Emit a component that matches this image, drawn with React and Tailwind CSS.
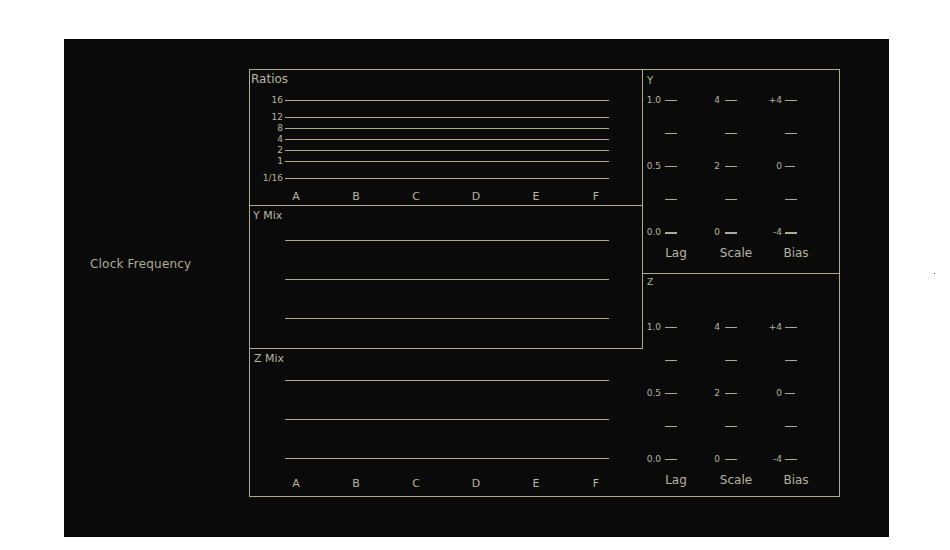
const ratioRows = [
  { label: '16', cls: '' },
  { label: '12', cls: 'mt-[6px]' },
  { label: '8', cls: '' },
  { label: '4', cls: '' },
  { label: '2', cls: '' },
  { label: '1', cls: '' },
  { label: '1/16', cls: 'mt-[6px]' },
]

const letters = ['A', 'B', 'C', 'D', 'E', 'F']

// each slider column: label box width, gap before tick, labels top -> bottom
const sliderCols = [
  { w: 'w-[18px]', gap: 'mr-[4px]', labels: ['1.0', '', '0.5', '', '0.0'] },
  { w: 'w-[17px]', gap: 'mr-[5px]', labels: ['4', '', '2', '', '0'] },
  { w: 'w-[19px]', gap: 'mr-[3px]', labels: ['+4', '', '0', '', '-4'] },
]

function Letters({ cls }) {
  return (
    <div className={`flex ml-[16px] text-[11px] leading-[16px] ${cls}`}>
      {letters.map(l => (
        <div key={l} className="w-[60px] text-center">{l}</div>
      ))}
    </div>
  )
}

function MixLines({ first }) {
  return (
    <div className="ml-[35px]">
      <div className={`w-[324px] h-px bg-[#b0aa92] ${first}`} />
      <div className="w-[324px] h-px bg-[#b0aa92] mt-[38px]" />
      <div className="w-[324px] h-px bg-[#b0aa92] mt-[38px]" />
    </div>
  )
}

function Sliders({ thick, labelShift }) {
  return (
    <>
      <div className="flex">
        {sliderCols.map((col, ci) => (
          <div key={ci} className="w-[60px] flex flex-col">
            {col.labels.map((lab, ri) => {
              const last = ri === 4
              const short = ci === 2 && ri === 2
              return (
                <div key={ri} className="h-[33px] flex items-center">
                  <div className={`${col.w} ${short ? 'mr-px' : col.gap} text-right text-[9px] leading-[11px]`}>{lab}</div>
                  <div
                    className={
                      short
                        ? 'w-[10px] h-px bg-[#b0aa92] ml-[2px]'
                        : last && thick
                          ? 'w-[12px] h-[2px] bg-[#b0aa92]'
                          : 'w-[12px] h-px bg-[#b0aa92]'
                    }
                  />
                </div>
              )
            })}
          </div>
        ))}
      </div>
      <div className={`flex ml-[3px] text-[12px] leading-[16px] ${labelShift}`}>
        <div className="w-[60px] text-center">Lag</div>
        <div className="w-[60px] text-center">Scale</div>
        <div className="w-[60px] text-center">Bias</div>
      </div>
    </>
  )
}

export default function App() {
  return (
    <div className="min-h-[550px] bg-white pl-[64px] pt-[39px] flex items-start font-['DejaVu_Sans',sans-serif]">
      <div className="w-[825px] h-[498px] bg-[#0a0a0a] text-[#b8b4a0] flex">
        {/* left label */}
        <div className="w-[185px] pl-[26px] pt-[217px] text-[12px] leading-[16px] tracking-[0.2px] text-[#b0ac98]">
          Clock Frequency
        </div>

        {/* main box */}
        <div className="mt-[30px] self-start border border-[#b0aa92] grid grid-cols-[393px_196px] grid-rows-[136px_68px_75px_147px]">
          {/* Ratios */}
          <div className="col-start-1 row-start-1 border-r border-b border-[#b0aa92]">
            <div className="pt-px h-[16px] pl-px text-[12px] leading-[16px]">Ratios</div>
            <div className="mt-[9px]">
              {ratioRows.map(r => (
                <div key={r.label} className={`h-[11px] flex items-center ${r.cls}`}>
                  <div className="w-[33px] text-right text-[9px] leading-[11px]">{r.label}</div>
                  <div className="ml-[2px] w-[324px] h-px bg-[#b0aa92]" />
                </div>
              ))}
            </div>
            <Letters cls="mt-[5px]" />
          </div>

          {/* Y panel */}
          <div className="col-start-2 row-start-1 row-span-2 border-b border-[#b0aa92]">
            <div className="h-[14px] pl-[4px] text-[10px] leading-[22px]">Y</div>
            <Sliders thick labelShift="-mt-[4px]" />
          </div>

          {/* Y Mix */}
          <div className="col-start-1 row-start-2 row-span-2 border-r border-b border-[#b0aa92]">
            <div className="pt-[2px] pl-[3px] text-[11px] leading-[16px]">Y Mix</div>
            <MixLines first="mt-[16px]" />
          </div>

          {/* Z panel */}
          <div className="col-start-2 row-start-3 row-span-2">
            <div className="h-[37px] pt-[2px] pl-[4px] text-[9px] leading-[12px]">Z</div>
            <Sliders labelShift="-mt-[4px]" />
          </div>

          {/* Z Mix */}
          <div className="col-start-1 row-start-4">
            <div className="pt-[2px] pl-[4px] text-[11px] leading-[16px]">Z Mix</div>
            <MixLines first="mt-[13px]" />
            <Letters cls="mt-[17px]" />
          </div>
        </div>
      </div>
      <div className="ml-[45px] mt-[234px] w-px h-px bg-[#555555]" />
    </div>
  )
}
